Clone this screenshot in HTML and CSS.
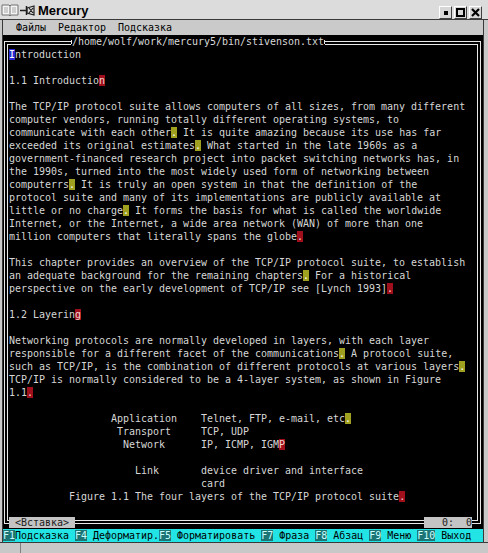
FILE: index.html
```html
<!DOCTYPE html>
<html>
<head>
<meta charset="utf-8">
<title>Mercury</title>
<link rel="stylesheet" href="styles.css">
</head>
<body>
<div class="window">
  <div class="titlebar">
    <svg class="title-icon" width="34" height="14" viewBox="0 0 34 14">
      <path d="M1 2 H8 L9 3 L10 2 H17 V12 H10 L9 13 L8 12 H1 Z" fill="#f4f4f4" stroke="#707070" stroke-width="1"/>
      <path d="M9 3 V12" stroke="#707070" stroke-width="1"/>
      <path d="M3 5 H7 M3 7 H7 M3 9 H7 M11 5 H15 M11 7 H15 M11 9 H15" stroke="#a8a8a8" stroke-width="1"/>
      <path d="M19 7.5 H25" stroke="#202020" stroke-width="1.5"/>
      <path d="M25.5 3 V12" stroke="#202020" stroke-width="1.5"/>
      <path d="M26 5 L33 3 V12 L26 10 Z M28 5 L32 10 M32 5 L28 10" fill="none" stroke="#202020" stroke-width="1.2"/>
    </svg>
    <span class="title-text">Mercury</span>
    <div class="title-buttons">
      <div class="tbtn"><span class="ico-min"></span></div>
      <div class="tbtn"><span class="ico-max"></span></div>
      <div class="tbtn">
        <svg width="9" height="9" viewBox="0 0 9 9"><path d="M1 1 L8 8 M8 1 L1 8" stroke="#000" stroke-width="2.2"/></svg>
      </div>
    </div>
  </div>
  <div class="client">
    <div class="menubar">Файлы  Редактор  Подсказка</div>
    <div class="term">
      <div class="frame">
        <span class="frame-title">/home/wolf/work/mercury5/bin/stivenson.txt</span>
        <div class="frame-inner">
<pre class="text"><span class="cur">I</span>ntroduction

1.1 Introductio<span class="rd">n</span>

The TCP/IP protocol suite allows computers of all sizes, from many different
computer vendors, running totally different operating systems, to
communicate with each other<span class="ol">.</span> It is quite amazing because its use has far
exceeded its original estimates<span class="ol">.</span> What started in the late 1960s as a
government-financed research project into packet switching networks has, in
the 1990s, turned into the most widely used form of networking between
computerrs<span class="ol">.</span> It is truly an open system in that the definition of the
protocol suite and many of its implementations are publicly available at
little or no charge<span class="ol">.</span> It forms the basis for what is called the worldwide
Internet, or the Internet, a wide area network (WAN) of more than one
million computers that literally spans the globe<span class="rd">.</span>

This chapter provides an overview of the TCP/IP protocol suite, to establish
an adequate background for the remaining chapters<span class="ol">.</span> For a historical
perspective on the early development of TCP/IP see [Lynch 1993]<span class="rd">.</span>

1.2 Layerin<span class="rd">g</span>

Networking protocols are normally developed in layers, with each layer
responsible for a different facet of the communications<span class="ol">.</span> A protocol suite,
such as TCP/IP, is the combination of different protocols at various layers<span class="ol">.</span>
TCP/IP is normally considered to be a 4-layer system, as shown in Figure
1.1<span class="rd">.</span>

                 Application    Telnet, FTP, e-mail, etc<span class="ol">.</span>
                  Transport     TCP, UDP
                   Network      IP, ICMP, IGM<span class="rd">P</span>

                     Link       device driver and interface
                                card
          Figure 1.1 The four layers of the TCP/IP protocol suite<span class="rd">.</span>
</pre>
        </div>
        <span class="frame-label label-left"> &lt;Вставка&gt; </span>
        <span class="frame-label label-right">   0:  0</span>
      </div>
      <div class="fbar"><span class="fk">F1</span>Подсказка <span class="fk">F4</span> Деформатир.<span class="fk">F5</span> Форматировать <span class="fk">F7</span> Фраза <span class="fk">F8</span> Абзац <span class="fk">F9</span> Меню <span class="fk">F10</span> Выход</div>
    </div>
  </div>
  <div class="bottom"><div class="grip"></div></div>
</div>
</body>
</html>
```

FILE: styles.css
```css
body {
  margin: 0;
  background: #c8c8c8;
}

.window {
  width: 488px;
  height: 553px;
  background: #c8c8c8;
  display: flex;
  flex-direction: column;
  overflow: hidden;
}

.titlebar {
  height: 19px;
  flex: none;
  background: #dcdcdc;
  border-bottom: 1px solid #3a3a3a;
  display: flex;
  align-items: center;
  padding-left: 1px;
}

.title-icon {
  flex: none;
  margin-top: 1px;
}

.title-text {
  margin-left: 3px;
  font-family: "Liberation Sans", Arial, sans-serif;
  font-weight: bold;
  font-size: 13px;
  color: #000;
  margin-top: 1px;
}

.title-buttons {
  margin-left: auto;
  margin-right: 6px;
  align-self: flex-end;
  display: flex;
  gap: 2px;
}

.tbtn {
  width: 11px;
  height: 11px;
  background: #d6d6d6;
  border: 1px solid;
  border-color: #ffffff #404040 #404040 #ffffff;
  display: flex;
  align-items: center;
  justify-content: center;
}

.ico-min {
  width: 4px;
  height: 4px;
  background: #000;
}

.ico-max {
  width: 5px;
  height: 5px;
  border: 2px solid #000;
}

.client {
  flex: none;
  margin: 0 4px 0 2px;
  border-left: 1px solid #3a3a3a;
  border-right: 1px solid #3a3a3a;
  display: flex;
  flex-direction: column;
}

.menubar {
  height: 15px;
  line-height: 15px;
  background: #cacaca;
  padding-left: 13px;
  color: #000;
  font-family: "DejaVu Sans Mono", monospace;
  font-size: 9.97px;
  white-space: pre;
}

.term {
  height: 507px;
  background: #000;
}

.frame {
  position: relative;
  box-sizing: border-box;
  height: 483px;
  margin: 6px 2px 0 1px;
  border: 1px solid #e8e8e8;
  padding: 2px;
}

.frame-inner {
  box-sizing: border-box;
  height: 100%;
  border: 1px solid #e8e8e8;
}

.frame-title {
  position: absolute;
  top: -7px;
  left: 66px;
  height: 13px;
  line-height: 13px;
  background: #000;
  color: #d8d8d8;
  font-family: "DejaVu Sans Mono", monospace;
  font-size: 9.97px;
  white-space: pre;
  padding: 0 1px;
}

.frame-title::before,
.frame-title::after {
  content: "";
  position: absolute;
  top: 5px;
  width: 1px;
  height: 4px;
  background: #e8e8e8;
}

.frame-title::before { left: 0; }
.frame-title::after { right: 0; }

.text {
  margin: 0;
  padding: 3px 0 0 1px;
  color: #d6d6d6;
  font-family: "DejaVu Sans Mono", monospace;
  font-size: 9.97px;
  line-height: 13px;
  white-space: pre;
}

.cur {
  background: #2a2ad0;
  color: #ffffff;
}

.rd {
  background: #a0101c;
  color: #f0d0d0;
}

.ol {
  background: #a0a020;
  color: #ffffff;
}

.frame-label {
  position: absolute;
  bottom: -5px;
  height: 11px;
  line-height: 11px;
  background: #c4c4c4;
  color: #202020;
  font-family: "DejaVu Sans Mono", monospace;
  font-size: 9.97px;
  white-space: pre;
}

.label-left { left: 4px; }
.label-right { right: 8px; }

.fbar {
  margin-top: 5px;
  height: 13px;
  line-height: 13px;
  background: #22e4e4;
  color: #000;
  font-family: "DejaVu Sans Mono", monospace;
  font-size: 9.97px;
  white-space: pre;
  overflow: hidden;
}

.fk {
  background: #1c7474;
  color: #c8ffff;
}

.bottom {
  flex: 1;
  border-top: 1px solid #3a3a3a;
  background: #c8c8c8;
  display: flex;
}

.grip {
  width: 20px;
  border-right: 1px solid #808080;
}
```
